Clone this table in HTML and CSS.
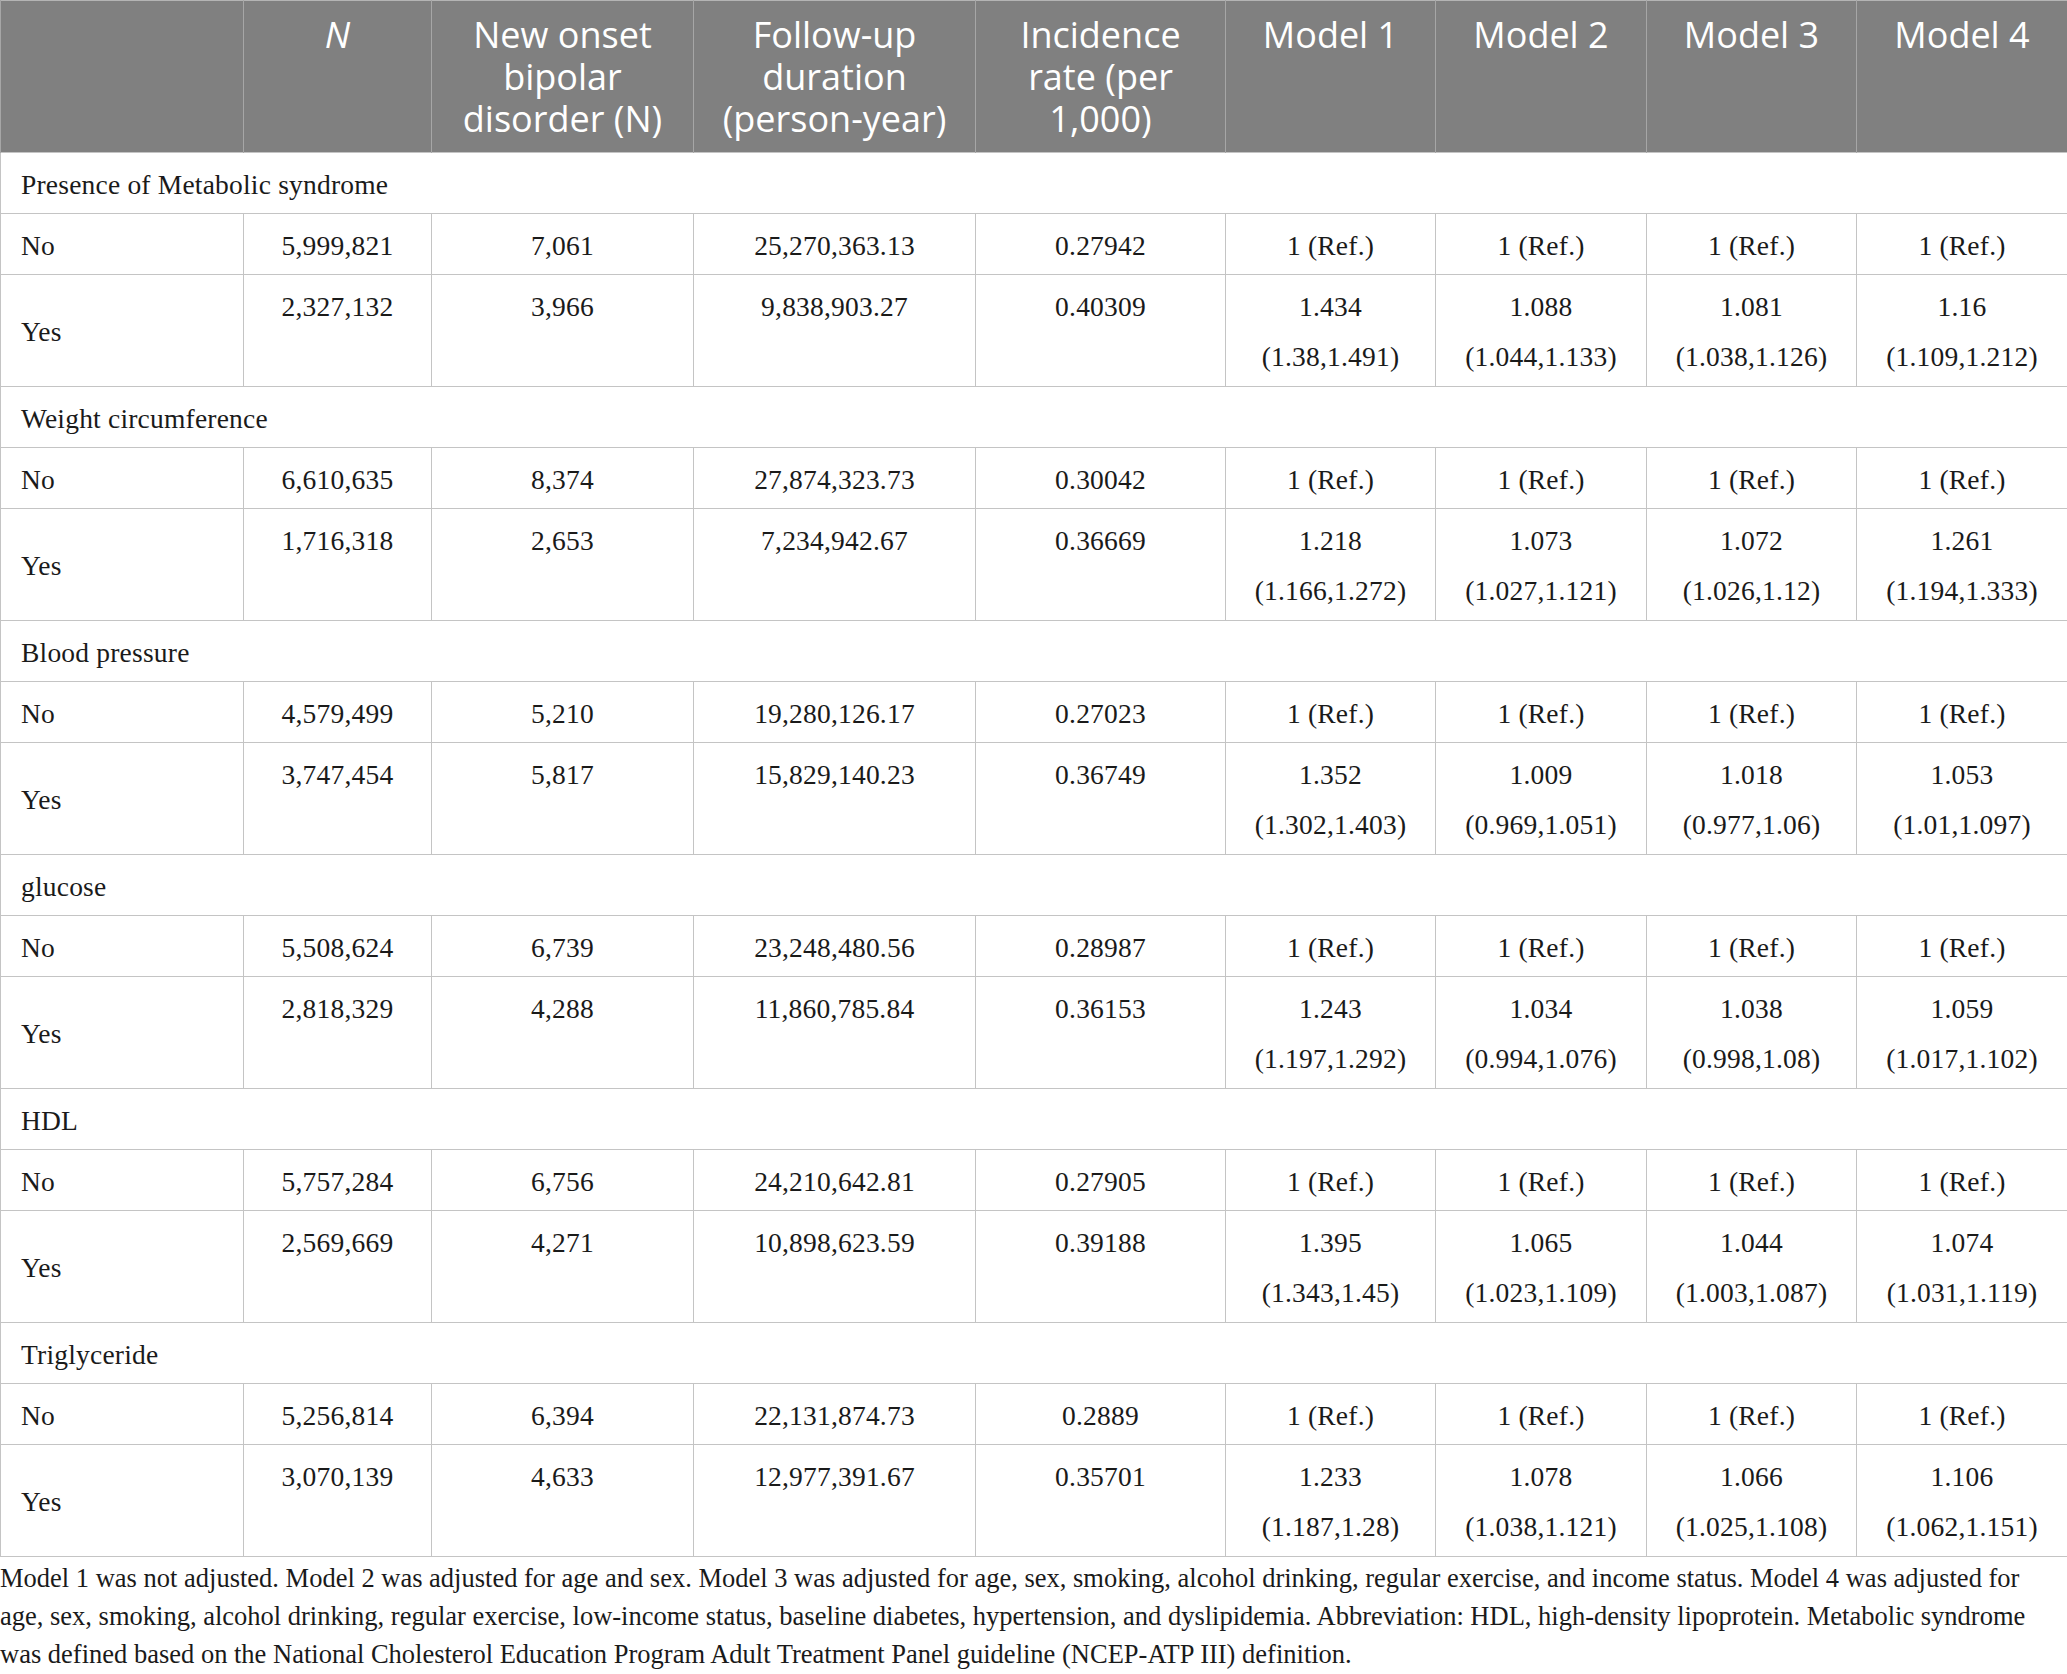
FILE: index.html
```html
<!DOCTYPE html>
<html lang="en">
<head>
<meta charset="utf-8">
<title>Table</title>
<link rel="stylesheet" href="styles.css">
</head>
<body>
<table class="data">
  <colgroup>
    <col class="c-label"><col class="c-n"><col class="c-onset"><col class="c-fu"><col class="c-inc">
    <col class="c-m1"><col class="c-m2"><col class="c-m3"><col class="c-m4">
  </colgroup>
  <thead>
    <tr>
      <th></th>
      <th><i>N</i></th>
      <th>New onset<br>bipolar<br>disorder (N)</th>
      <th>Follow-up<br>duration<br>(person-year)</th>
      <th>Incidence<br>rate (per<br>1,000)</th>
      <th>Model 1</th>
      <th>Model 2</th>
      <th>Model 3</th>
      <th>Model 4</th>
    </tr>
  </thead>
  <tbody>
    <tr class="sec"><td colspan="9">Presence of Metabolic syndrome</td></tr>
    <tr class="no"><td>No</td><td>5,999,821</td><td>7,061</td><td>25,270,363.13</td><td>0.27942</td><td>1 (Ref.)</td><td>1 (Ref.)</td><td>1 (Ref.)</td><td>1 (Ref.)</td></tr>
    <tr class="yes"><td>Yes</td><td>2,327,132</td><td>3,966</td><td>9,838,903.27</td><td>0.40309</td><td>1.434<br>(1.38,1.491)</td><td>1.088<br>(1.044,1.133)</td><td>1.081<br>(1.038,1.126)</td><td>1.16<br>(1.109,1.212)</td></tr>

    <tr class="sec"><td colspan="9">Weight circumference</td></tr>
    <tr class="no"><td>No</td><td>6,610,635</td><td>8,374</td><td>27,874,323.73</td><td>0.30042</td><td>1 (Ref.)</td><td>1 (Ref.)</td><td>1 (Ref.)</td><td>1 (Ref.)</td></tr>
    <tr class="yes"><td>Yes</td><td>1,716,318</td><td>2,653</td><td>7,234,942.67</td><td>0.36669</td><td>1.218<br>(1.166,1.272)</td><td>1.073<br>(1.027,1.121)</td><td>1.072<br>(1.026,1.12)</td><td>1.261<br>(1.194,1.333)</td></tr>

    <tr class="sec"><td colspan="9">Blood pressure</td></tr>
    <tr class="no"><td>No</td><td>4,579,499</td><td>5,210</td><td>19,280,126.17</td><td>0.27023</td><td>1 (Ref.)</td><td>1 (Ref.)</td><td>1 (Ref.)</td><td>1 (Ref.)</td></tr>
    <tr class="yes"><td>Yes</td><td>3,747,454</td><td>5,817</td><td>15,829,140.23</td><td>0.36749</td><td>1.352<br>(1.302,1.403)</td><td>1.009<br>(0.969,1.051)</td><td>1.018<br>(0.977,1.06)</td><td>1.053<br>(1.01,1.097)</td></tr>

    <tr class="sec"><td colspan="9">glucose</td></tr>
    <tr class="no"><td>No</td><td>5,508,624</td><td>6,739</td><td>23,248,480.56</td><td>0.28987</td><td>1 (Ref.)</td><td>1 (Ref.)</td><td>1 (Ref.)</td><td>1 (Ref.)</td></tr>
    <tr class="yes"><td>Yes</td><td>2,818,329</td><td>4,288</td><td>11,860,785.84</td><td>0.36153</td><td>1.243<br>(1.197,1.292)</td><td>1.034<br>(0.994,1.076)</td><td>1.038<br>(0.998,1.08)</td><td>1.059<br>(1.017,1.102)</td></tr>

    <tr class="sec"><td colspan="9">HDL</td></tr>
    <tr class="no"><td>No</td><td>5,757,284</td><td>6,756</td><td>24,210,642.81</td><td>0.27905</td><td>1 (Ref.)</td><td>1 (Ref.)</td><td>1 (Ref.)</td><td>1 (Ref.)</td></tr>
    <tr class="yes"><td>Yes</td><td>2,569,669</td><td>4,271</td><td>10,898,623.59</td><td>0.39188</td><td>1.395<br>(1.343,1.45)</td><td>1.065<br>(1.023,1.109)</td><td>1.044<br>(1.003,1.087)</td><td>1.074<br>(1.031,1.119)</td></tr>

    <tr class="sec"><td colspan="9">Triglyceride</td></tr>
    <tr class="no"><td>No</td><td>5,256,814</td><td>6,394</td><td>22,131,874.73</td><td>0.2889</td><td>1 (Ref.)</td><td>1 (Ref.)</td><td>1 (Ref.)</td><td>1 (Ref.)</td></tr>
    <tr class="yes"><td>Yes</td><td>3,070,139</td><td>4,633</td><td>12,977,391.67</td><td>0.35701</td><td>1.233<br>(1.187,1.28)</td><td>1.078<br>(1.038,1.121)</td><td>1.066<br>(1.025,1.108)</td><td>1.106<br>(1.062,1.151)</td></tr>
  </tbody>
</table>
<p class="note">Model 1 was not adjusted. Model 2 was adjusted for age and sex. Model 3 was adjusted for age, sex, smoking, alcohol drinking, regular exercise, and income status. Model 4 was adjusted for<br>age, sex, smoking, alcohol drinking, regular exercise, low-income status, baseline diabetes, hypertension, and dyslipidemia. Abbreviation: HDL, high-density lipoprotein. Metabolic syndrome<br>was defined based on the National Cholesterol Education Program Adult Treatment Panel guideline (NCEP-ATP III) definition.</p>
</body>
</html>
```

FILE: styles.css
```css
html, body {
  margin: 0;
  padding: 0;
  background: #ffffff;
}

body {
  font-family: "Liberation Serif", "Times New Roman", serif;
  color: #1a1a1a;
}

.data {
  width: 2067px;
  table-layout: fixed;
  border-collapse: collapse;
  border-top: 1px solid #b4b4b4;
}

.c-label { width: 243px; }
.c-n { width: 188px; }
.c-onset { width: 262px; }
.c-fu { width: 282px; }
.c-inc { width: 250px; }
.c-m1 { width: 210px; }
.c-m2 { width: 211px; }
.c-m3 { width: 210px; }
.c-m4 { width: 211px; }

.data th {
  background: #808080;
  color: #ffffff;
  font-family: "Open Sans", "DejaVu Sans", sans-serif;
  font-weight: 400;
  font-size: 36px;
  line-height: 42px;
  text-align: center;
  vertical-align: top;
  padding: 13px 6px 10px;
  border-left: 1px solid #a6a6a6;
  border-right: 1px solid #a6a6a6;
  height: 128px;
}

.data th i {
  font-style: italic;
}

.data td {
  font-size: 27.5px;
  letter-spacing: 0.2px;
  line-height: 50px;
  padding: 7px 10px 3px;
  text-align: center;
  vertical-align: top;
  border: 1px solid #c4c4c4;
  white-space: nowrap;
}

.data td:first-child {
  text-align: left;
  padding-left: 20px;
}

.data tr.yes td {
  padding-bottom: 4px;
}

.data tr.yes td:first-child {
  vertical-align: middle;
}

.note {
  margin: 2px 0 0;
  font-size: 26.5px;
  line-height: 38px;
  white-space: nowrap;
}
```
